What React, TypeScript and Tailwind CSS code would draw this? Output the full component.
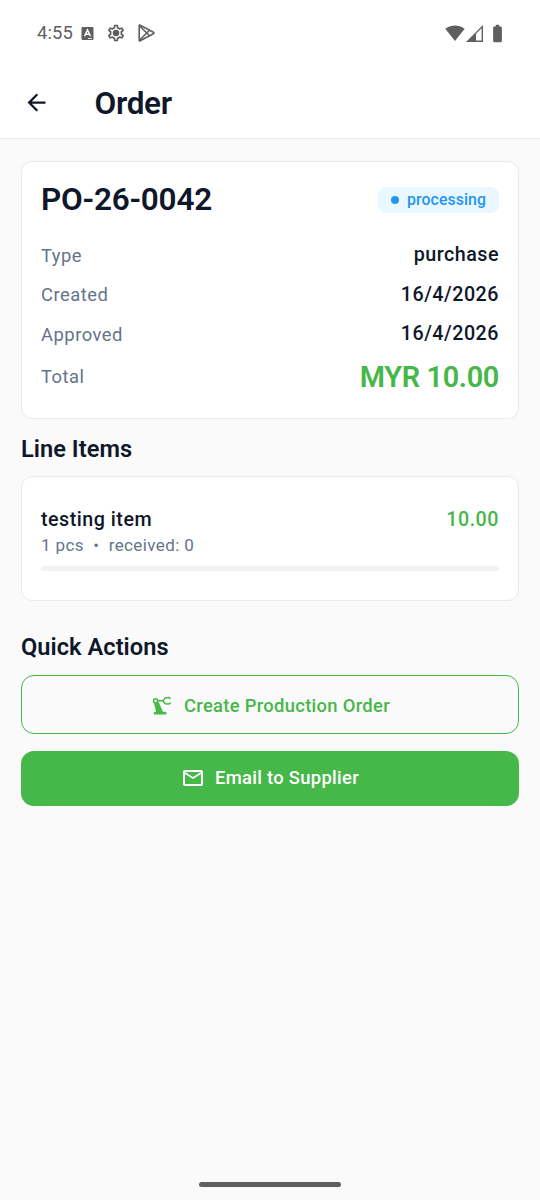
import type { ReactNode } from 'react'
import { MdArrowBack, MdBatteryFull, MdOutlineEmail, MdOutlineSettings, MdSignalWifi4Bar } from 'react-icons/md'

interface DetailRowProps {
  label: string
  className: string
  children: ReactNode
}

const order = {
  number: 'PO-26-0042',
  status: 'processing',
  type: 'purchase',
  created: '16/4/2026',
  approved: '16/4/2026',
  total: 'MYR 10.00',
}

const items = [{ id: 1, name: 'testing item', quantity: 1, unit: 'pcs', received: 0, amount: '10.00' }]

function StatusBar() {
  return (
    <div className="flex h-[66px] items-center justify-between pl-[37px] pr-[32px] text-[#5f5f5f]">
      <div className="flex items-center">
        <span className="w-[44px] text-[18.4px] leading-none tracking-[0.1px]">4:55</span>
        <svg width="13" height="13" viewBox="0 0 12 13">
          <rect width="12" height="13" rx="1" fill="currentColor" />
          <path d="M3 9.3 6 3l3 6.3M4.2 7.3h3.6" fill="none" stroke="#fff" strokeWidth="1.5" />
          <path d="M6.5 11.5h4" stroke="#fff" strokeWidth="0.8" />
        </svg>
        <span className="relative ml-[12px] flex">
          <MdOutlineSettings size={20} />
          <svg className="absolute left-[7px] top-[7px]" width="6" height="6" viewBox="0 0 6 6">
            <circle cx="3" cy="3" r="3" fill="currentColor" />
          </svg>
        </span>
        <svg className="ml-[11px]" width="19" height="20" viewBox="0 0 19 20" fill="none" stroke="currentColor" strokeWidth="1.6" strokeLinejoin="round">
          <path d="M2.2 2.7v14.6q0 1 1 .5l13.2-7q1-.8 0-1.6L3.2 2.2q-1-.5-1 .5Z" />
          <path d="m2.5 2.7 10 10M2.5 17.3l10-10" />
        </svg>
      </div>
      <div className="flex items-center">
        <MdSignalWifi4Bar size={20} />
        <svg className="ml-[1px]" width="17" height="17" viewBox="0 0 17 17">
          <path d="M0 17 17 0v17H0Z" fill="currentColor" />
          <path d="M10 8.8 15.6 3.2v12.3H10V8.8Z" fill="#fff" />
        </svg>
        <MdBatteryFull className="ml-[4px]" size={21} />
      </div>
    </div>
  )
}

function RobotArmIcon() {
  return (
    <svg className="mr-[12px]" width="20" height="20" viewBox="0 0 20 20" fill="none" stroke="currentColor" strokeWidth="1.5">
      <circle cx="3.6" cy="4.8" r="2.1" />
      <path d="M5.6 4.8h5M18.6 2.6 16.4 1.5l-3.2.4-2.3 2.9 2.3 2.9 3.2.4 2.2-1.1" strokeLinejoin="round" />
      <path d="M2 7.2q2 .6 4.8-.9l4.1 9.5h2q1.5 0 1.5 1.4v1.4H1.8v-1.4q0-1.4 1.5-1.4h.8L2 7.2Z" fill="currentColor" stroke="none" />
    </svg>
  )
}

function DetailRow({ label, className, children }: DetailRowProps) {
  return (
    <div className={`flex items-center justify-between ${className}`}>
      <span className="pt-[1px] text-[18.4px] font-normal leading-none tracking-[0.5px] text-[#64748b]">{label}</span>
      {children}
    </div>
  )
}

export default function App() {
  return (
    <div className="flex h-[1200px] w-[540px] flex-col bg-[#fafafa] font-[Roboto,sans-serif] text-[#0f172a]">
      <header className="h-[139px] border-b border-[#e5e7eb] bg-white">
        <StatusBar />
        <div className="flex h-[73px] items-center pl-[23px]">
          <MdArrowBack size={27} />
          <h1 className="ml-[44.5px] pt-[2px] text-[31.5px] font-semibold leading-none tracking-[-0.3px]">Order</h1>
        </div>
      </header>

      <main className="flex flex-1 flex-col px-[21px] pt-[22px]">
        <section className="h-[258px] rounded-[11px] border border-[#e8eaed] bg-white px-[19px] pt-[20px]">
          <div className="flex h-[36px] items-center justify-between">
            <h2 className="text-[31.5px] font-semibold leading-none tracking-[-0.2px]">{order.number}</h2>
            <span className="flex h-[26px] items-center gap-[8px] rounded-[8px] bg-[#ebf7fe] pl-[13px] pr-[13px] text-[15.8px] font-medium leading-none tracking-[0.1px] text-[#2196f3]">
              <span className="size-[8px] rounded-full bg-[#2196f3]" />
              {order.status}
            </span>
          </div>
          <div className="pt-[17.5px] text-[19.7px] font-medium leading-none tracking-[0.5px]">
            <DetailRow label="Type" className="h-[39.5px]">{order.type}</DetailRow>
            <DetailRow label="Created" className="h-[39.5px]">{order.created}</DetailRow>
            <DetailRow label="Approved" className="h-[39.5px]">{order.approved}</DetailRow>
            <DetailRow label="Total" className="h-[46px]">
              <span className="text-[28.9px] font-semibold tracking-[-0.35px] text-[#46b749]">{order.total}</span>
            </DetailRow>
          </div>
        </section>

        <h3 className="mt-[16px] text-[23.6px] font-semibold leading-[28px] tracking-[0.05px]">Line Items</h3>
        <section className="mt-[13px] h-[125px] rounded-[11px] border border-[#e8eaed] bg-white px-[19px] pt-[30px]">
          {items.map((item) => (
            <div key={item.id}>
              <div className="flex justify-between text-[19.7px] font-medium leading-[26px] tracking-[0.5px]">
                <span>{item.name}</span>
                <span className="text-[#46b749]">{item.amount}</span>
              </div>
              <p className="whitespace-pre text-[17px] leading-[25px] tracking-[0.4px] text-[#64748b]">
                {item.quantity} {item.unit}{'  •  '}received: {item.received}
              </p>
              <div className="mt-[8px] h-[5px] rounded-full bg-[#f0f3f4]" />
            </div>
          ))}
        </section>

        <h3 className="mt-[32px] text-[23.6px] font-semibold leading-[28px] tracking-[0.05px]">Quick Actions</h3>
        <button className="mt-[14px] flex h-[59px] items-center justify-center rounded-[13px] border-[1.3px] border-[#46b749] pl-[2px] pt-[2px] text-[18.4px] font-medium tracking-[0.3px] text-[#46b749]">
          <RobotArmIcon />
          Create Production Order
        </button>
        <button className="mt-[17px] flex h-[55px] items-center justify-center rounded-[13px] bg-[#46b749] pb-px text-[18.4px] font-medium tracking-[0.3px] text-white">
          <MdOutlineEmail className="mr-[10px]" size={24} />
          Email to Supplier
        </button>
      </main>

      <div className="mx-auto mb-[13px] h-[5px] w-[142px] rounded-full bg-[#606060]" />
    </div>
  )
}
